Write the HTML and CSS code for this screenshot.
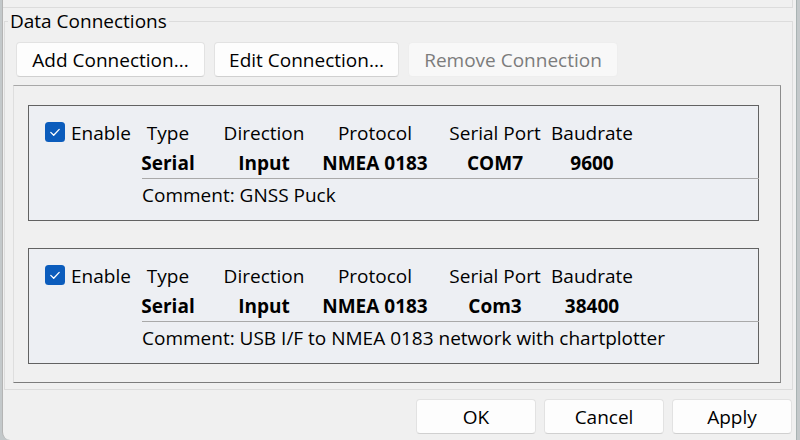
FILE: index.html
```html
<!DOCTYPE html>
<html>
<head>
<meta charset="utf-8">
<link rel="stylesheet" href="styles.css">
</head>
<body>
<div class="window">
  <div class="top-strip"></div>
  <fieldset class="group">
    <legend class="group-title">Data Connections</legend>
    <div class="group-body">
      <div class="btn-row">
        <button class="btn add">Add Connection...</button>
        <button class="btn edit">Edit Connection...</button>
        <button class="btn remove" disabled>Remove Connection</button>
      </div>
      <div class="scroll-area">
        <div class="card">
          <div class="row head">
            <div class="enable">
              <svg class="check" width="20" height="20" viewBox="0 0 20 20"><rect x="0" y="0" width="20" height="20" rx="3.5" fill="#0b5cbc"/><path d="M5.8 10.4 L8.7 13.2 L14.2 7.4" fill="none" stroke="#fff" stroke-width="1.3" stroke-linecap="round" stroke-linejoin="round"/></svg>
              <span>Enable</span>
            </div>
            <div class="cell c1"><span>Type</span></div>
            <div class="cell c2"><span>Direction</span></div>
            <div class="cell c3"><span>Protocol</span></div>
            <div class="cell c4"><span>Serial Port</span></div>
            <div class="cell c5"><span>Baudrate</span></div>
          </div>
          <div class="row vals">
            <div class="enable"></div>
            <div class="cell c1"><span>Serial</span></div>
            <div class="cell c2"><span>Input</span></div>
            <div class="cell c3"><span>NMEA 0183</span></div>
            <div class="cell c4"><span>COM7</span></div>
            <div class="cell c5"><span>9600</span></div>
          </div>
          <div class="sep"></div>
          <div class="comment">Comment: GNSS Puck</div>
        </div>
        <div class="card">
          <div class="row head">
            <div class="enable">
              <svg class="check" width="20" height="20" viewBox="0 0 20 20"><rect x="0" y="0" width="20" height="20" rx="3.5" fill="#0b5cbc"/><path d="M5.8 10.4 L8.7 13.2 L14.2 7.4" fill="none" stroke="#fff" stroke-width="1.3" stroke-linecap="round" stroke-linejoin="round"/></svg>
              <span>Enable</span>
            </div>
            <div class="cell c1"><span>Type</span></div>
            <div class="cell c2"><span>Direction</span></div>
            <div class="cell c3"><span>Protocol</span></div>
            <div class="cell c4"><span>Serial Port</span></div>
            <div class="cell c5"><span>Baudrate</span></div>
          </div>
          <div class="row vals">
            <div class="enable"></div>
            <div class="cell c1"><span>Serial</span></div>
            <div class="cell c2"><span>Input</span></div>
            <div class="cell c3"><span>NMEA 0183</span></div>
            <div class="cell c4"><span>Com3</span></div>
            <div class="cell c5"><span>38400</span></div>
          </div>
          <div class="sep"></div>
          <div class="comment">Comment: USB I/F to NMEA 0183 network with chartplotter</div>
        </div>
      </div>
    </div>
  </fieldset>
  <div class="bottom-bar">
    <button class="btn dlg">OK</button>
    <button class="btn dlg">Cancel</button>
    <button class="btn dlg">Apply</button>
  </div>
</div>
</body>
</html>
```
FILE: styles.css
```css
* { box-sizing: border-box; }
html, body {
  margin: 0;
  padding: 0;
  width: 800px;
  height: 440px;
  overflow: hidden;
  background: #c3c8ca;
  font-family: "Open Sans", "Noto Sans", sans-serif;
  font-size: 19px;
  color: #000;
}
.window {
  margin-left: 2px;
  width: 795px;
  height: 440px;
  background: #f0f0f0;
  border-left: 1px solid #b4b4b4;
  border-right: 1px solid #a9b3b3;
  border-bottom-left-radius: 8px;
  display: flex;
  flex-direction: column;
}
.top-strip {
  width: 790px;
  height: 8px;
  border-bottom: 1px solid #dcdcdc;
  border-right: 1px solid #dcdcdc;
  flex: none;
}
.group {
  margin: 0 0 0 1px;
  width: 789px;
  padding: 0 0 6px 0;
  border: 1px solid #dcdcdc;
  min-width: 0;
  flex: none;
}
.group-title {
  margin-left: 3px;
  padding: 1px 2px 0;
  line-height: 25px;
  height: 26px;
}
.group-body {
  padding-left: 8px;
}
.btn-row {
  display: flex;
  gap: 9px;
  margin: 8px 0 0 3px;
}
.btn {
  font-family: inherit;
  font-size: 19px;
  color: #000;
  height: 35px;
  padding: 2px 0 0;
  background: #fdfdfd;
  border: 1px solid #e2e2e2;
  border-bottom-color: #d0d0d0;
  border-radius: 4px;
  line-height: 31px;
  white-space: nowrap;
}
.add { width: 189px; }
.edit { width: 185px; }
.remove { width: 210px; }
.btn:disabled {
  background: #f8f8f8;
  color: #7c7c7c;
  border-color: #eeeeee;
}
.scroll-area {
  margin-top: 8px;
  width: 768px;
  height: 298px;
  border-top: 1px solid #a8a8a8;
  border-left: 1px solid #dedede;
  border-right: 1px solid #8c8c8c;
  border-bottom: 1px solid #7c7c7c;
  padding: 19px 0 0 14px;
  display: flex;
  flex-direction: column;
  gap: 27px;
}
.card {
  width: 731px;
  height: 116px;
  background: #edeff3;
  border: 1px solid #626262;
  padding: 13px 0 0 16px;
  flex: none;
}
.row {
  display: grid;
  grid-template-columns: 85px 76px 116px 106px 134px 60px;
  height: 28px;
  align-items: center;
}
.vals {
  margin-top: 2px;
  font-weight: 700;
}
.cell {
  display: flex;
  justify-content: center;
  white-space: nowrap;
}
.enable {
  display: flex;
  align-items: center;
  gap: 6px;
  white-space: nowrap;
}
.check {
  flex: none;
  margin-top: -3px;
}
.sep {
  margin: 1px -1px 0 97px;
  height: 1px;
  background: #a9a9a9;
}
.comment {
  margin: 2px 0 0 97px;
  height: 28px;
  line-height: 28px;
  white-space: nowrap;
}
.bottom-bar {
  display: flex;
  justify-content: flex-end;
  gap: 8px;
  padding: 9px 4px 0 0;
}
.dlg {
  width: 120px;
}
```
